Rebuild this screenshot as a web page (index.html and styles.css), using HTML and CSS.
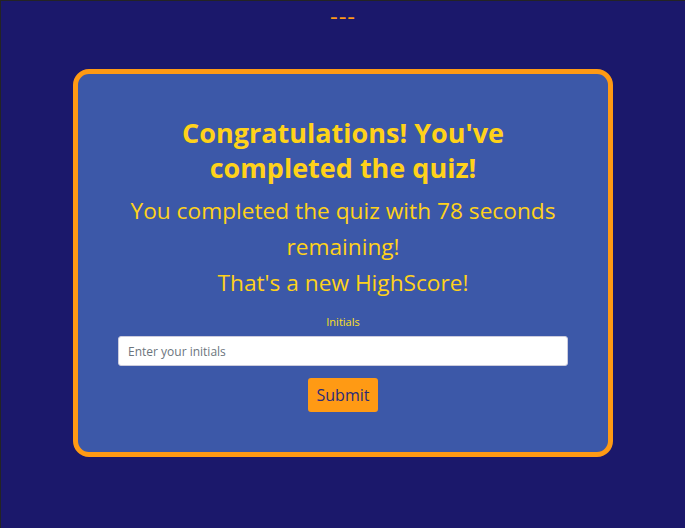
FILE: index.html
```html
<!DOCTYPE html>
<html>
<head>
<meta charset="utf-8">
<link rel="stylesheet" href="styles.css">
</head>
<body>
<div class="timer">---</div>
<main class="card">
  <h1 class="title">Congratulations! You've completed the quiz!</h1>
  <p class="msg">You completed the quiz with 78 seconds remaining!</p>
  <p class="msg msg-hs">That's a new HighScore!</p>
  <form class="form">
    <label class="label" for="ini">Initials</label>
    <input class="input" id="ini" type="text" placeholder="Enter your initials">
    <button class="btn" type="button">Submit</button>
  </form>
</main>
</body>
</html>
```
FILE: styles.css
```css
html, body { margin: 0; padding: 0; }
body {
  background: #1b186b;
  font-family: "Open Sans", "Noto Sans", sans-serif;
  height: 528px;
  box-sizing: border-box;
  border-top: 1px solid #242424;
  border-left: 1px solid #242424;
  overflow: hidden;
}
.timer {
  text-align: center;
  color: #ff9a14;
  font-size: 24px;
  line-height: 30px;
  height: 30px;
  letter-spacing: 1px;
}
.card {
  width: 540px;
  box-sizing: border-box;
  margin: 38px 0 0 72px;
  border: 5px solid #ff9a14;
  border-radius: 16px;
  background: #3c58a8;
  padding: 41px 40px 40px;
  text-align: center;
  color: #ffd21a;
}
.title {
  margin: 0 auto;
  width: 360px;
  font-size: 27px;
  line-height: 35px;
  font-weight: 700;
}
.msg {
  margin: 8px 0 0;
  font-size: 22.7px;
  line-height: 36px;
}
.msg-hs { margin-top: 0; }
.form {
  display: flex;
  flex-direction: column;
  align-items: center;
  margin-top: 13px;
}
.label {
  font-size: 11px;
  line-height: 16px;
  color: #ffe01a;
}
.input {
  margin-top: 6px;
  width: 100%;
  height: 30px;
  box-sizing: border-box;
  border: 1px solid #ccd;
  border-radius: 3px;
  padding: 0 9px;
  font-family: inherit;
  font-size: 12px;
}
.input::placeholder { color: #6c757d; }
.btn {
  margin-top: 12px;
  background: #ff9a14;
  color: #2b2a7a;
  border: none;
  border-radius: 3px;
  font-family: inherit;
  font-size: 16px;
  width: 70px;
  height: 34px;
  padding: 0;
}
```
